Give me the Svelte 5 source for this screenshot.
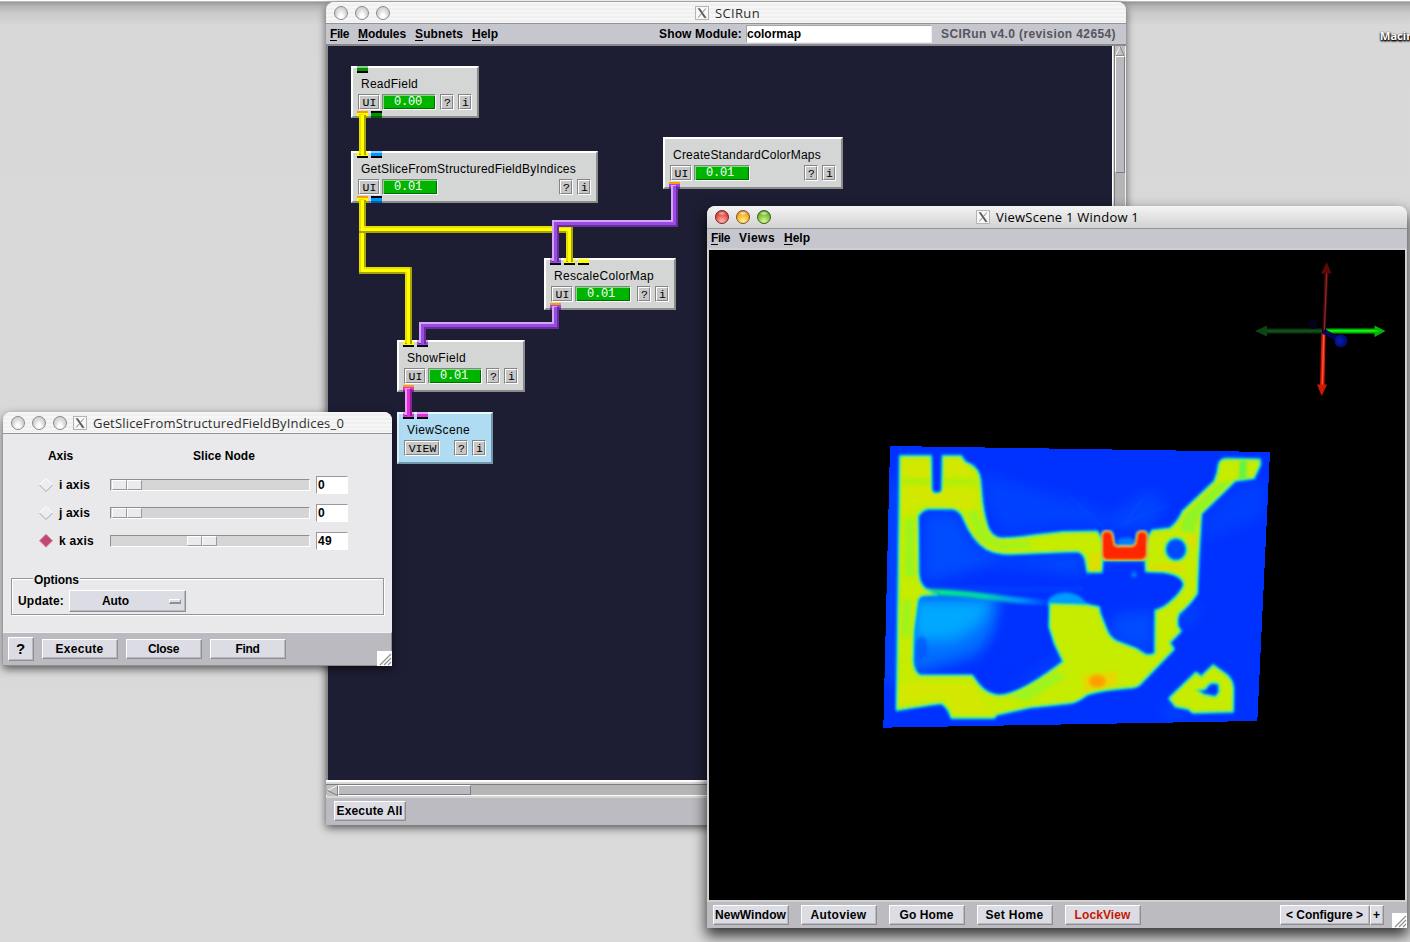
<script>
  const modules = [
    { name: 'ReadField', w: 57, x: 351, y: 66, width: 128, time: '0.00', inputs: ['#009400'], outputs: [['#ffff00', '#ff9d00'], ['#009400', '#000']] },
    { name: 'GetSliceFromStructuredFieldByIndices', w: 215, x: 351, y: 151, width: 247, time: '0.01', inputs: ['#ffff00', '#0095ff'], outputs: [['#ffff00', '#ff9d00'], ['#0095ff', '#000']] },
    { name: 'CreateStandardColorMaps', w: 148, x: 663, y: 137, width: 180, time: '0.01', inputs: [], outputs: [['#9b4ae6', '#ff9d00']] },
    { name: 'RescaleColorMap', w: 100, x: 544, y: 258, width: 132, time: '0.01', inputs: ['#9b4ae6', '#ffff00', '#ffff00'], outputs: [['#9b4ae6', '#ff9d00']] },
    { name: 'ShowField', w: 59, x: 397, y: 340, width: 128, time: '0.01', inputs: ['#ffff00', '#9b4ae6'], outputs: [['#dd33dd', '#ff9d00']] },
    { name: 'ViewScene', w: 63, x: 397, y: 412, width: 96, view: true, inputs: ['#dd33dd', '#dd33dd'], outputs: [] }
  ];

  const yellow = ['#a8a400', '#e6de00', '#ffff00'];
  const purple = ['#672f99', '#d3a6fa', '#9b4ae6'];
  const magenta = ['#8e2090', '#f29af2', '#dd33dd'];
  const pipes = [
    { c: yellow, p: '362.5,115 362.5,155' },
    { c: yellow, p: '362.5,200 362.5,270.5 408.5,270.5 408.5,344' },
    { c: yellow, p: '362.5,200 362.5,229.5 569.5,229.5 569.5,262' },
    { c: purple, p: '674.5,186 674.5,223.5 555.5,223.5 555.5,262' },
    { c: purple, p: '555.5,307 555.5,325.5 422.5,325.5 422.5,344' },
    { c: magenta, p: '408.5,389 408.5,416' }
  ];

  const axes = [
    { name: 'i axis', w: 31, value: '0', vw: 7, pos: 1 },
    { name: 'j axis', w: 31, value: '0', vw: 7, pos: 1 },
    { name: 'k axis', w: 35, value: '49', vw: 14, pos: 76, on: true }
  ];

  const viewButtons = [
    ['NewWindow', 71], ['Autoview', 56], ['Go Home', 54], ['Set Home', 58], ['LockView', 56]
  ];

  const body = 'M92 80L181 80L183 180Q186 192 200 192Q216 191 218 180L220 80L272 80L284 97L305 108Q326 122 329 150L335 215Q342 270 355 300Q370 327 398 327Q450 326 500 317L580 308L680 306L690 322L700 352L826 352L836 322L848 303L900 297Q925 280 940 245L1035 155Q1046 130 1048 105Q1052 88 1070 88L1168 90L1168 105L1150 143L1095 150L992 250L984 380L979 490Q960 520 925 550Q917 570 922 590L930 603L897 638L909 657L810 760Q800 772 770 772Q690 778 650 792Q620 815 600 817L480 830L380 852L370 862L246 862Q236 830 215 818Q190 820 82 838Z';
  const cavity = 'M142 258Q155 236 175 234L248 234Q275 240 285 270Q310 330 350 355Q380 370 420 370L620 362Q642 365 648 390L654 424L693 424L696 388L828 388L830 422L880 424Q940 432 944 465Q935 490 905 515Q885 535 858 543L857 670Q845 680 825 675L798 658L740 636Q718 625 708 600L688 550L685 533L650 526L542 522L540 590L556 640L582 695L560 712Q440 800 385 798Q350 795 325 765L305 738L150 738Q130 730 127 690L130 600L142 510Q146 496 165 494L200 492L168 480Q146 465 144 430Z';
  const bore = 'M884 358a34 36 0 1 0 68 0a34 36 0 1 0 -68 0Z';
  const island = 'M900 805L978 730L994 742L1030 708L1068 735Q1086 750 1088 775L1087 843L970 846L955 835L918 828ZM978 780L1005 775Q1014 757 1030 756L1048 760L1050 785Q1042 802 1033 802L1000 795Z';
  const part = body + cavity + bore + island;
  const clamp = 'M697 314Q700 304 712 304Q726 305 727 318L731 343Q733 349 742 350L786 350Q797 348 799 338L803 312Q806 305 818 305Q831 306 831 320L829 376Q825 389 812 389L712 389Q698 387 698 375Z';

  /* Spread the letters so a label takes the width of its X11 bitmap font. */
  function fit(node, width) {
    const apply = () => {
      node.style.letterSpacing = '0px';
      const natural = node.getBoundingClientRect().width;
      node.style.letterSpacing = (width - natural) / node.textContent.length + 'px';
    };
    apply();
    document.fonts?.ready.then(apply);
  }
</script>

{#snippet lights(live)}
  <div class="lights" class:live>
    <i class="l1"></i><i class="l2"></i><i class="l3"></i>
  </div>
{/snippet}

{#snippet xicon()}
  <svg class="xicon" width="14" height="14" viewBox="0 0 14 14">
    <rect x=".5" y=".5" width="13" height="13" fill="#f8f8f8" stroke="#b4b4b4" />
    <path d="M3 2.5L4.8 2.5L11.3 11.8L9.4 11.8Z" fill="#555" stroke="#555" stroke-width=".4" />
    <path d="M10.8 2.500L3.200 11.500" fill="none" stroke="#777" stroke-width=".9" />
  </svg>
{/snippet}

{#snippet grip()}
  <svg class="grip" width="15" height="15" viewBox="0 0 15 15">
    <rect width="15" height="15" fill="#fff" />
    <path d="M3 14L14 3M7 14L14 7M11 14L14 11" stroke="#8f8f8f" stroke-width="1.2" />
  </svg>
{/snippet}

<div class="desktop">
  <div class="disk"><span use:fit={58}>Macintosh</span></div>

  <section class="window main">
    <header class="title">
      {@render lights(false)}
      <div class="caption">{@render xicon()}<span use:fit={45}>SCIRun</span></div>
    </header>
    <nav class="menubar">
      <span use:fit={19}><u>F</u>ile</span>
      <span use:fit={48}><u>M</u>odules</span>
      <span use:fit={48}><u>S</u>ubnets</span>
      <span use:fit={26}><u>H</u>elp</span>
      <div class="search">
        <span use:fit={83}>Show Module:</span>
        <div class="field"><span use:fit={54}>colormap</span></div>
      </div>
      <span class="version" use:fit={175}>SCIRun v4.0 (revision 42654)</span>
    </nav>
    <div class="work">
      <div class="canvas"></div>
      <div class="vscroll">
        <svg width="10" height="10" viewBox="0 0 10 11"><path d="M5 .5L.5 10" stroke="#f4f4f4" /><path d="M5 .5L9.5 10.5H.5" stroke="#808080" fill="none" /></svg>
        <div class="vthumb"></div>
      </div>
    </div>
    <div class="hscroll">
      <svg width="11" height="11" viewBox="0 0 11 11"><path d="M.5 5.5L10.5 .5" stroke="#f4f4f4" /><path d="M.5 5.5L10.5 10.5V.5" stroke="#808080" fill="none" /></svg>
      <div class="hthumb"></div>
    </div>
    <footer class="mainfoot"><div class="button"><span use:fit={66}>Execute All</span></div></footer>
  </section>

  <div class="network">
    {#each modules as m}
      <article class="module" class:blue={m.view} style="left:{m.x}px;top:{m.y}px;width:{m.width}px">
        <div class="ports top">
          {#each m.inputs as color}<i style="background:{color}"></i>{/each}
        </div>
        <div class="name"><span use:fit={m.w}>{m.name}</span></div>
        <div class="row">
          {#if m.view}
            <b class="key wide"><span>VIEW</span></b>
          {:else}
            <b class="key ui"><span>UI</span></b>
            <b class="time">{m.time}</b>
          {/if}
          <b class="key help"><span>?</span></b>
          <b class="key"><span>i</span></b>
        </div>
        <div class="ports bottom">
          {#each m.outputs as [color, cap]}<i style="background:{color};border-color:{cap}"></i>{/each}
        </div>
      </article>
    {/each}
    <svg class="pipes" width="1126" height="500" viewBox="0 0 1126 500" shape-rendering="crispEdges">
      {#each pipes as pipe}
        <g fill="none" stroke-miterlimit="5">
          <polyline points={pipe.p} stroke={pipe.c[0]} stroke-width="7" />
          <polyline points={pipe.p} stroke={pipe.c[1]} stroke-width="5" transform="translate(-1 -1)" />
          <polyline points={pipe.p} stroke={pipe.c[2]} stroke-width="3" />
        </g>
      {/each}
    </svg>
  </div>

  <section class="window dialog">
    <header class="title">
      {@render lights(false)}
      <div class="caption">{@render xicon()}<span use:fit={251}>GetSliceFromStructuredFieldByIndices_0</span></div>
    </header>
    <div class="form">
      <div class="heads"><span use:fit={25}>Axis</span><span use:fit={62}>Slice Node</span></div>
      {#each axes as a}
        <div class="axis">
          <svg class="radio" width="14" height="14" viewBox="0 0 14 14">
            <path d="M7 .5L13.5 7L7 13.5L.5 7Z" fill={a.on ? '#c54672' : '#ededf0'} />
            <path d="M.5 7L7 .5L13.5 7" fill="none" stroke={a.on ? '#b06080' : '#fdfdfd'} />
            <path d="M.5 7L7 13.5L13.5 7" fill="none" stroke={a.on ? '#e8b8c8' : '#a5a5a5'} />
          </svg>
          <div class="axname"><span use:fit={a.w}>{a.name}</span></div>
          <div class="slider"><div class="thumb" style="margin-left:{a.pos}px"><i></i><i></i></div></div>
          <div class="value"><span use:fit={a.vw}>{a.value}</span></div>
        </div>
      {/each}
      <div class="options">
        <div class="legend"><span use:fit={47}>Options</span></div>
        <div class="update">
          <span use:fit={46}>Update:</span>
          <div class="select"><span use:fit={27}>Auto</span><i></i></div>
        </div>
      </div>
    </div>
    <footer class="dlgfoot">
      <div class="button q"><span>?</span></div>
      <div class="button"><span use:fit={48}>Execute</span></div>
      <div class="button"><span use:fit={31}>Close</span></div>
      <div class="button"><span use:fit={24}>Find</span></div>
    </footer>
    {@render grip()}
  </section>

  <section class="window viewer">
    <header class="title">
      {@render lights(true)}
      <div class="caption">{@render xicon()}<span use:fit={143}>ViewScene 1 Window 1</span></div>
    </header>
    <nav class="menubar">
      <span use:fit={19}><u>F</u>ile</span>
      <span use:fit={36}>Views</span>
      <span use:fit={26}><u>H</u>elp</span>
    </nav>
    <div class="scene">
      <svg width="696" height="650" viewBox="709 250 696 650">
        <defs>
          <filter id="soft" x="-5%" y="-5%" width="110%" height="110%"><feGaussianBlur stdDeviation="2.4" /></filter>
          <filter id="haze" x="-30%" y="-30%" width="160%" height="160%"><feGaussianBlur stdDeviation="20" /></filter>
          <filter id="thin" x="-10%" y="-100%" width="120%" height="300%"><feGaussianBlur stdDeviation="5" /></filter>
          <clipPath id="void"><path d={cavity} /></clipPath>
          <clipPath id="solid"><path d={part} clip-rule="evenodd" /></clipPath>
          <clipPath id="plane"><path d="M60 48L1200 66L1162 873L40 893Z" /></clipPath>
          <linearGradient id="film" gradientUnits="userSpaceOnUse" x1="150" y1="0" x2="530" y2="0">
            <stop offset="0" stop-color="#50f020" /><stop offset=".2" stop-color="#00e890" /><stop offset=".5" stop-color="#00d8a8" /><stop offset=".8" stop-color="#0090ff" /><stop offset="1" stop-color="#0044ff" />
          </linearGradient>
          <radialGradient id="ball" cx=".4" cy=".5"><stop offset="0" stop-color="#0a1eb4" /><stop offset="1" stop-color="#020b70" /></radialGradient>
        </defs>
        <g transform="translate(870 430) scale(.33333)">
          <path d="M60 48L1200 66L1162 873L40 893Z" fill="#0032ff" shape-rendering="crispEdges" />
          <g clip-path="url(#plane)">
            <g fill="#005cff" filter="url(#haze)" opacity=".65">
              <path d="M340 130L500 180L680 230L700 290L560 290L400 310L350 240Z" opacity=".6" />
              <path d="M660 290L840 180L890 220L840 300Z" opacity=".7" />
              <path d="M160 250L260 250L320 350L420 385L640 375L640 430L380 400L160 460Z" />
              <path d="M1100 170L1190 150L1180 260L1000 330L1000 260Z" opacity=".5" />
              <path d="M720 560L850 540L850 670L730 630Z" />
              <path d="M400 780L560 660L570 700Z" />
              <path d="M940 540L1000 520L940 600ZM870 820L960 850L900 870Z" />
              <path d="M58 150L90 150L80 760L45 760Z" />
            </g>
            <g clip-path="url(#void)">
              <g filter="url(#haze)">
                <path d="M120 500L400 510L380 600L330 670L240 700L115 730Z" fill="#0070ff" />
                <path d="M120 500L370 500L330 580L250 630L120 630Z" fill="#00a8ff" />
              </g>
              <path d="M400 516Q460 510 530 524L534 600L560 680L440 740L350 740L330 720Q400 640 400 516Z" fill="#0030ff" filter="url(#haze)" />
              <path d="M120 470L640 470L640 484L350 490L160 478Z" fill="#003cff" filter="url(#thin)" />
              <ellipse cx="155" cy="655" rx="18" ry="36" fill="#0055ff" filter="url(#thin)" opacity=".7" />
              <path d="M530 520Q540 488 590 487Q630 490 650 520L650 530L535 530Z" fill="#009cff" filter="url(#thin)" />
              <path d="M145 486Q260 486 350 500Q440 512 530 518" fill="none" stroke="url(#film)" stroke-width="18" filter="url(#thin)" />
            </g>
            <g stroke="#0070ff" stroke-width="4" filter="url(#thin)" opacity=".35">
              <path d="M640 440L860 350M730 295L900 225M850 300L1050 220M600 200L700 290M820 200L760 290" />
            </g>
            <g filter="url(#thin)"><ellipse cx="768" cy="335" rx="28" ry="12" fill="#0080ff" /><circle cx="792" cy="434" r="9" fill="#0078ff" /><ellipse cx="918" cy="358" rx="34" ry="36" fill="#0048ff" /></g>
            <g filter="url(#soft)" fill-rule="evenodd" stroke-linejoin="round">
              <path d={part} fill="none" stroke="#0088ff" stroke-width="15" />
              <path d={part} fill="#c6ec00" stroke="#00e0b0" stroke-width="9" />
              <path d={part} fill="#c6ec00" stroke="#2df04c" stroke-width="4" />
            </g>
            <g clip-path="url(#solid)" filter="url(#thin)">
              <path d="M98 145L176 145L176 162L98 162ZM224 146L312 146L322 162L224 162Z" fill="#b0ee08" />
              <path d="M106 270L132 260L134 440L104 440ZM100 510L124 510L118 620L96 620Z" fill="#9cf41c" />
              <path d="M98 90L175 90L180 140L98 140ZM228 90L270 90L310 135L228 140ZM98 165L320 180L310 240L150 215L98 255ZM90 760L300 760L330 800L360 850L250 850L220 800L90 820Z" fill="#dce600" opacity=".6" />
              <path d="M290 245L320 240L350 310L390 340L480 335L480 352L390 357L330 330Z" fill="#a0f41c" />
              <path d="M945 255L1045 160L1085 150L985 255L970 310L930 300Z" fill="#90f428" />
              <path d="M1110 90L1130 90L1128 150L1106 150Z" fill="#60f448" />
              <path d="M420 800L560 725L590 740L470 815Z" fill="#a0f41c" />
              <path d="M640 735L740 725L740 765L640 785Z" fill="#e6d800" /><ellipse cx="682" cy="753" rx="26" ry="19" fill="#ffa000" />
              <path d="M660 370L690 370L690 420L660 420ZM950 320L980 315L975 345L950 345ZM840 405L930 400L950 425L840 420Z" fill="#dede00" />
            </g>
            <g filter="url(#soft)" stroke-linejoin="round">
              <path d={clamp} fill="none" stroke="#00c8e0" stroke-width="12" opacity=".7" />
              <path d={clamp} fill="none" stroke="#c8f000" stroke-width="8" />
              <path d={clamp} fill="#ff2800" stroke="#ff6000" stroke-width="3" />
            </g>
          </g>
        </g>
        <g>
          <path d="M1266 328.5H1322V333.5H1266Z" fill="#053c08" /><path d="M1266 330H1322V332H1266Z" fill="#1b4a1e" />
          <path d="M1255 331L1267 325.5V336.5Z" fill="#0d4512" />
          <path d="M1324.5 272L1328.5 272L1325.5 331H1322.5Z" fill="#480606" /><path d="M1326 272L1327.3 272L1325 331H1323.8Z" fill="#7d2f2c" />
          <path d="M1326.6 262L1331.5 273.5H1321Z" fill="#5c0a08" />
          <circle cx="1313" cy="324.5" r="4.5" fill="#02021c" />
          <path d="M1326 328.5H1375V333.5H1326Z" fill="#00b400" /><path d="M1326 330H1376V331.7H1326Z" fill="#10f510" />
          <path d="M1374.5 325.5L1385.5 331L1374.5 337Z" fill="#05b205" /><path d="M1374 330L1381 331L1374 332Z" fill="#18e818" />
          <path d="M1321.5 333H1325.5L1324.5 386H1320Z" fill="#d81400" /><path d="M1323 333H1324.6L1323 386H1321.6Z" fill="#ff5038" />
          <path d="M1317 384.5L1327 384.5L1321.7 396Z" fill="#cc1a04" />
          <path d="M1322 333.5L1325 329L1338 336.5L1336 341Z" fill="#020650" />
          <circle cx="1341" cy="340.8" r="6.5" fill="url(#ball)" />
        </g>
      </svg>
    </div>
    <footer class="viewfoot">
      {#each viewButtons as [label, w]}
        <div class="button" class:red={label === 'LockView'}><span use:fit={w}>{label}</span></div>
      {/each}
      <div class="pair">
        <div class="button conf"><span use:fit={77}>&lt; Configure &gt;</span></div>
        <div class="button plus"><span>+</span></div>
      </div>
    </footer>
    {@render grip()}
  </section>
</div>

<style>
  :global(body) { margin: 0; overflow: hidden; }
  .desktop { position: relative; width: 1410px; height: 942px; overflow: hidden; box-sizing: border-box; background: linear-gradient(#fff 0 1px, #b9bbb7 1px 2px, #989898 2px, #b4b4b4 6px, #cacaca 13px, #d8d8d8 26px, #dadada); font: bold 12px/20px "Liberation Sans", Arial, sans-serif; color: #000; }
  .desktop * { box-sizing: border-box; }
  span { display: inline-block; white-space: pre; flex: none; }
  u { text-decoration-thickness: 1px; text-underline-offset: 2px; }
  .disk { position: absolute; left: 1380px; top: 26px; color: #fff; font: bold 11px/20px "Open Sans", sans-serif; text-shadow: 0 1px 2px #000, 0 1px 2px #000, 1px 1px 2px #222; }

  .window { position: absolute; display: flex; flex-direction: column; border-radius: 8px 8px 0 0; overflow: visible; box-shadow: 0 3px 8px rgba(0,0,0,.6); }
  .main { left: 326px; top: 2px; width: 800px; height: 823px; background: #c6c6cf; }
  .viewer { left: 707px; top: 206px; width: 700px; height: 722px; background: #d0d0d0; box-shadow: 0 7px 14px 1px rgba(0,0,0,.75); }
  .dialog { left: 3px; top: 412px; width: 389px; height: 254px; background: #e9e9eb; }
  .title { flex: none; height: 22px; display: flex; align-items: center; border-bottom: 1px solid #959595; border-radius: 8px 8px 0 0; background: repeating-linear-gradient(#f6f6f6 0 2px, #f0f0f0 2px 4px); padding-left: 8px; font: 13px/20px "Open Sans", "Noto Sans", sans-serif; color: #2e2e2e; }
  .viewer .title { height: 23px; background: linear-gradient(#f4f4f4, #d2d2d2); color: #000; }
  .lights { display: flex; gap: 7px; }
  .lights i { width: 14px; height: 14px; border-radius: 50%; border: 1px solid #898989; background: radial-gradient(ellipse at 50% 85%, #fff 0 20%, #dcdcdc 55%, #c2c2c2 100%); }
  .live .l1 { border-color: #742020; background: radial-gradient(ellipse 5px 2.5px at 50% 18%, #fff9, #fff0), radial-gradient(circle at 50% 85%, #ffb8ae, #e0463e 65%, #902020); }
  .live .l2 { border-color: #84501c; background: radial-gradient(ellipse 5px 2.5px at 50% 18%, #fffb, #fff0), radial-gradient(circle at 50% 85%, #fff590, #f7a620 65%, #a45b10); }
  .live .l3 { border-color: #355e1d; background: radial-gradient(ellipse 5px 2.5px at 50% 18%, #fffb, #fff0), radial-gradient(circle at 50% 85%, #dcf990, #6eb92c 65%, #356318); }
  .caption { display: flex; align-items: center; gap: 6px; }
  .main .caption { margin-left: 305px; }
  .viewer .caption { margin-left: 205px; }
  .dialog .caption { margin-left: 6px; }

  .menubar { flex: none; display: flex; align-items: center; height: 20px; padding-left: 4px; gap: 9px; background: #c6c6cf; line-height: 20px; }
  .viewer .menubar { padding-left: 4px; height: 19px; }
  .viewer .menubar span { margin-top: -2px; }
  .search { display: flex; align-items: center; margin-left: 152px; gap: 4px; }
  .field { width: 186px; height: 18px; background: #fff; border: 1px solid; border-color: #a5a5a5 #eee #eee #a5a5a5; line-height: 16px; }
  .version { color: #55555a; }
  .work { flex: none; height: 736px; display: flex; border-top: 2px solid #8a8a8c; border-left: 2px solid #8a8a8c; background: #d6d6d6; }
  .canvas { width: 785px; height: 734px; background: #1d1e33; border-right: 1px solid #fff; }
  .vscroll { margin-left: 1px; width: 12px; background: #b5b5b5; border-left: 1px solid #7d7d7d; border-right: 1px solid #eee; padding: 0; }
  .vscroll svg, .hscroll svg { display: block; flex: none; background: #c0c0c0; }
  .vthumb { height: 117px; background: #bbbac1; border: 1px solid; border-color: #fff #7d7d7d #7d7d7d #fff; }
  .hscroll { flex: none; height: 18px; display: flex; align-items: center; background: linear-gradient(#fff 0 2px, #d6d6d6 2px 4px, #7d7d7d 4px 5px, #b5b5b5 5px 15px, #fff 15px 16px, #d6d6d6 16px); padding: 2px 0 0 1px; }
  .hthumb { width: 133px; height: 10px; background: #bbbac1; border: 1px solid; border-color: #fff #7d7d7d #7d7d7d #fff; }
  .mainfoot { flex: 1; background: #bcbbc1; padding: 3px 0 0 8px; }
  .button { flex: none; width: 76px; height: 20px; display: flex; align-items: center; justify-content: center; background: #dcdce4; border: 1px solid; border-color: #fff #8e8e93 #8e8e93 #fff; box-shadow: inset -1px -1px #b9b9c0; line-height: 18px; padding-right: 1px; }
  .mainfoot .button { width: 72px; }
  .red { color: #c61800; }

  .network, .pipes { position: absolute; left: 0; top: 0; }
  .module { position: absolute; height: 52px; background: #d4d6d5; border: 2px solid; border-color: #fff #8a8c8a #8a8c8a #fff; padding: 0 5px; display: flex; flex-direction: column; }
  .blue { background: #afdcf3; border-color: #e6fbff #7197a8 #7197a8 #e6fbff; }
  .ports { position: absolute; left: 4px; display: flex; gap: 3px; height: 7px; }
  .ports i { width: 11px; height: 7px; }
  .top { top: -2px; }
  .top i { border-bottom: 2px solid #000; box-shadow: inset 0 2px rgba(255,255,255,.55); }
  .bottom { bottom: -2px; }
  .bottom i { border-top: 2px solid; box-shadow: inset 0 -2px rgba(0,0,0,.35); }
  .name { font-weight: normal; height: 26px; line-height: 20px; padding: 6px 0 0 3px; }
  .row { display: flex; gap: 4px; height: 16px; }
  .key { flex: none; width: 14px; height: 16px; border: 1px solid; border-color: #858585 #fff #fff #858585; font: 11.5px/13px "Liberation Mono", monospace; }
  .key span { display: block; height: 14px; text-align: center; background: #c7c7c7; border: 1px solid; border-color: #fff #858585 #858585 #fff; overflow: hidden; padding-left: 1px; }
  .ui { width: 22px; }
  .wide { width: 36px; }
  .help { margin-left: auto; }
  .time { margin-left: -2px; width: 56px; background: #00b400; color: #fff; border: 1px solid; border-color: #858585 #fff #fff #858585; box-shadow: inset 1px 1px #7fe07f, inset -1px -1px #006c00; font: 12px/15px "Liberation Mono", monospace; padding-left: 11px; letter-spacing: -.2px; }

  .form { height: 198px; }
  .heads { display: flex; padding: 12px 0 0 45px; height: 37px; gap: 120px; line-height: 20px; }
  .axis { display: flex; height: 28px; align-items: center; padding-left: 36px; }
  .axname { margin-left: 6px; width: 51px; }
  .slider { width: 200px; height: 12px; background: #d4d5d4; border: 1px solid; border-color: #8e8e8e #fff #fff #8e8e8e; }
  .thumb { display: flex; width: 30px; height: 10px; }
  .thumb i { width: 15px; height: 10px; background: #ebebed; border: 1px solid; border-color: #fff #999 #999 #fff; }
  .value { width: 32px; height: 18px; margin-left: 6px; background: #fff; border: 1px solid; border-color: #999 #fff #fff #999; line-height: 16px; padding-left: 1px; }
  .options { margin: 23px 8px 0; height: 37px; border: 1px solid #969696; box-shadow: inset 1px 1px #fff, 1px 1px #fff; }
  .legend { height: 12px; margin: -9px 0 0 21px; line-height: 20px; }
  .legend span { background: #e9e9eb; padding: 0 1px; height: 17px; }
  .update { display: flex; align-items: center; gap: 5px; padding: 8px 0 0 6px; }
  .select { width: 117px; height: 22px; background: #dcdce4; border: 1px solid; border-color: #fff #8e8e93 #8e8e93 #fff; box-shadow: inset -1px -1px #b9b9c0; display: flex; align-items: center; padding-left: 32px; }
  .select i { margin-left: 40px; width: 12px; height: 5px; border: 1px solid; border-color: #fff #8e8e93 #8e8e93 #fff; border-bottom-width: 2px; }
  .dlgfoot { flex: 1; display: flex; align-items: center; gap: 8px; background: #bbbac0; border-top: 1px solid #f2f2f2; padding: 0 0 0 5px; border-right: 1px solid #8e8e8e; border-bottom: 1px solid #8e8e8e; }
  .q { width: 26px; height: 24px; font-size: 15px; }
  .grip { position: absolute; right: 0; bottom: 0; }

  .scene { flex: none; height: 654px; padding: 2px; background: #d0d0d0; }
  .scene svg { display: block; background: #000; }
  .viewfoot { flex: 1; display: flex; gap: 12px; padding: 3px 23px 0 6px; background: #bcbbc0; }
  .pair { display: flex; margin-left: auto; }
  .conf { width: 90px; }
  .plus { width: 14px; }
</style>
